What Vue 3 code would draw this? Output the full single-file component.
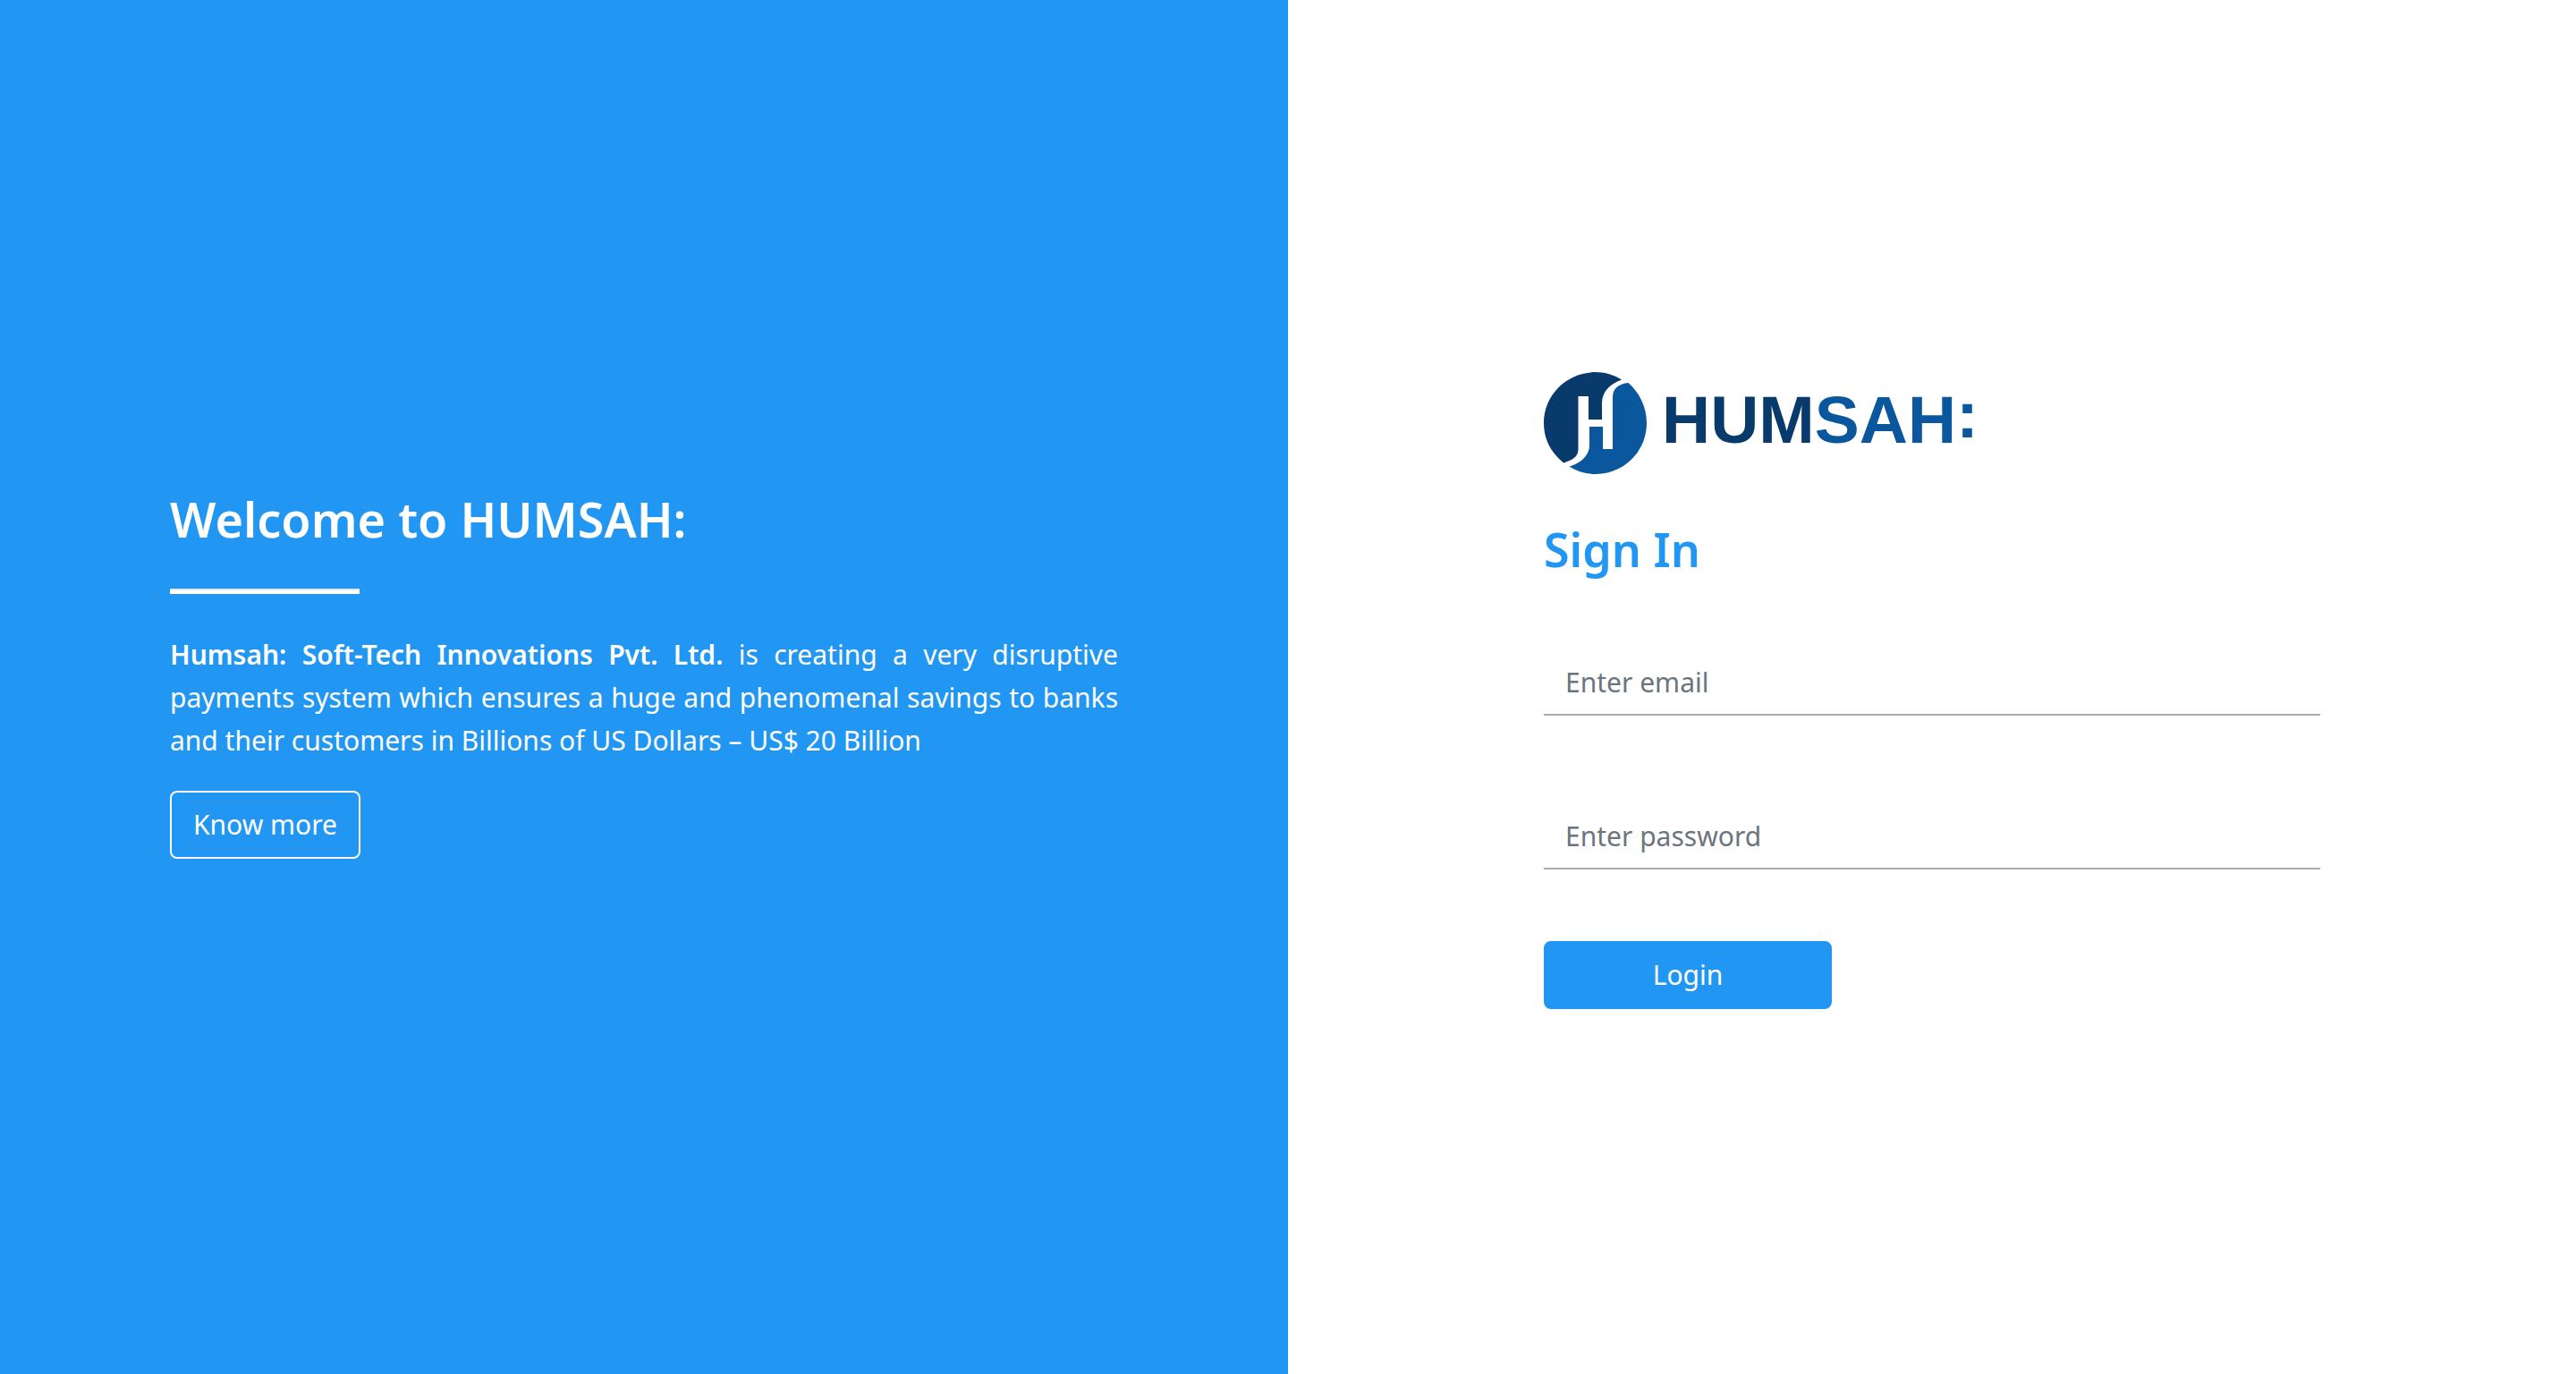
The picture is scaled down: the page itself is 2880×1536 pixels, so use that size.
<script setup>
import { ref } from 'vue'

const email = ref('')
const password = ref('')
</script>

<template>
  <main class="page">
    <section class="intro">
      <h1>Welcome to HUMSAH:</h1>
      <hr />
      <p>
        <strong>Humsah: Soft-Tech Innovations Pvt. Ltd.</strong> is creating a very disruptive
        payments system which ensures a huge and phenomenal savings to banks and their customers in
        Billions of US Dollars – US$ 20 Billion
      </p>
      <button type="button" class="btn outline">Know more</button>
    </section>

    <section class="login">
      <svg class="logo" viewBox="0 0 496 132" role="img" aria-label="HUMSAH:">
        <path
          class="dark"
          d="M22 109.5 C7 97 0 82 0 65 C0 33 26 8 58 8 C69 8 78 11 87 16.500 C74 21 65 30 65 43 L65 61 L50 61 L50 35 L38.500 35 L38.500 94 C38.500 102 33 106 22 109.500 Z"
        />
        <path
          class="mid"
          d="M94.500 20 C107 31 115 47 115 65 C115 97 89 122 58 122 C47 122 37 119 28.500 113.500 C41 110 51 101 51 90 L51 69 L66 69 L66 94 L77 94 L77 36 C77 27 83 21 94.500 20 Z"
        />
        <text x="132" y="87"><tspan class="dark">HUM</tspan><tspan class="mid">SAH</tspan></text>
        <text class="mid" x="461" y="81">:</text>
      </svg>
      <h2>Sign In</h2>
      <form @submit.prevent>
        <input v-model="email" type="email" placeholder="Enter email" aria-label="Email" />
        <input v-model="password" type="password" placeholder="Enter password" aria-label="Password" />
        <button type="submit" class="btn solid">Login</button>
      </form>
    </section>
  </main>
</template>

<style>
body {
  margin: 0;
  background: #fff;
}
</style>

<style scoped>
.page {
  display: grid;
  grid-template-columns: 1fr 1fr;
  min-height: 100vh;
  font-family: "Noto Sans", "Open Sans", sans-serif;
  font-size: 30px;
  line-height: 48px;
}

.page * {
  box-sizing: border-box;
}

.intro,
.login {
  display: flex;
  flex-direction: column;
  justify-content: center;
  align-items: flex-start;
}

.intro {
  padding: 0 190px 30px;
  background: #2196f3;
  color: #fff;
}

.login {
  padding: 0 286px;
}

h1,
h2 {
  margin: 0;
  font-weight: 600;
  line-height: 68px;
}

h1 {
  font-size: 54px;
}

h2 {
  margin-top: 40px;
  color: #2196f3;
  font-size: 52px;
}

hr {
  width: 212px;
  height: 6px;
  margin: 44px 0;
  border: 0;
  border-top: 2px solid #e5e5e5;
  background: #fff;
}

p {
  margin: 0 0 32px;
  text-align: justify;
}

strong {
  font-weight: 600;
}

.btn {
  height: 76px;
  padding: 0 24px;
  border: 2px solid;
  border-radius: 8px;
  font: inherit;
  color: #fff;
  cursor: pointer;
}

.outline {
  border-color: #fff;
  background: transparent;
}

.solid {
  width: 322px;
  border-color: #2196f3;
  background: #2196f3;
}

.logo {
  display: block;
  width: 496px;
  max-width: 100%;
  font: bold 75px "Liberation Sans", Arial, sans-serif;
}

.dark {
  fill: #083b6b;
}

.mid {
  fill: #0b579d;
}

form {
  display: flex;
  flex-direction: column;
  align-items: flex-start;
  gap: 80px;
  width: 100%;
  margin-top: 60px;
}

input {
  width: 100%;
  height: 92px;
  padding: 30px 24px 12px;
  border: 0;
  border-bottom: 2px solid #aaa;
  background: transparent;
  font: inherit;
  color: #495057;
}

input::placeholder {
  color: #6c757d;
  opacity: 1;
}
</style>
